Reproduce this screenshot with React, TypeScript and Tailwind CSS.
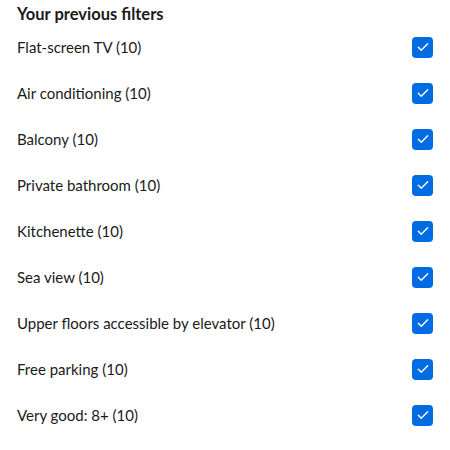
const filters = [
  "Flat-screen TV (10)",
  "Air conditioning (10)",
  "Balcony (10)",
  "Private bathroom (10)",
  "Kitchenette (10)",
  "Sea view (10)",
  "Upper floors accessible by elevator (10)",
  "Free parking (10)",
  "Very good: 8+ (10)",
  "",
];

function CheckBox() {
  return (
    <span className="flex h-[21px] w-[21px] shrink-0 items-center justify-center rounded-[4px] bg-[#006ce4]">
      <svg width="14" height="14" viewBox="0 0 24 24" fill="none">
        <path
          d="M4 12.5l5 5L20 6.5"
          stroke="white"
          strokeWidth="2.4"
          strokeLinecap="round"
          strokeLinejoin="round"
        />
      </svg>
    </span>
  );
}

export default function App() {
  return (
    <div className="h-[450px] w-[450px] overflow-hidden bg-white font-['Lato',sans-serif] text-[#1a1a1a]">
      <h2 className="px-[17px] pt-[3px] text-[16.5px] font-bold leading-[22px]">
        Your previous filters
      </h2>
      <ul className="mt-[-1px]">
        {filters.map((f, i) => (
          <li
            key={i}
            className="flex h-[46px] items-center justify-between px-[17px]"
          >
            <span className="text-[15px] leading-5">{f}</span>
            <CheckBox />
          </li>
        ))}
      </ul>
    </div>
  );
}
